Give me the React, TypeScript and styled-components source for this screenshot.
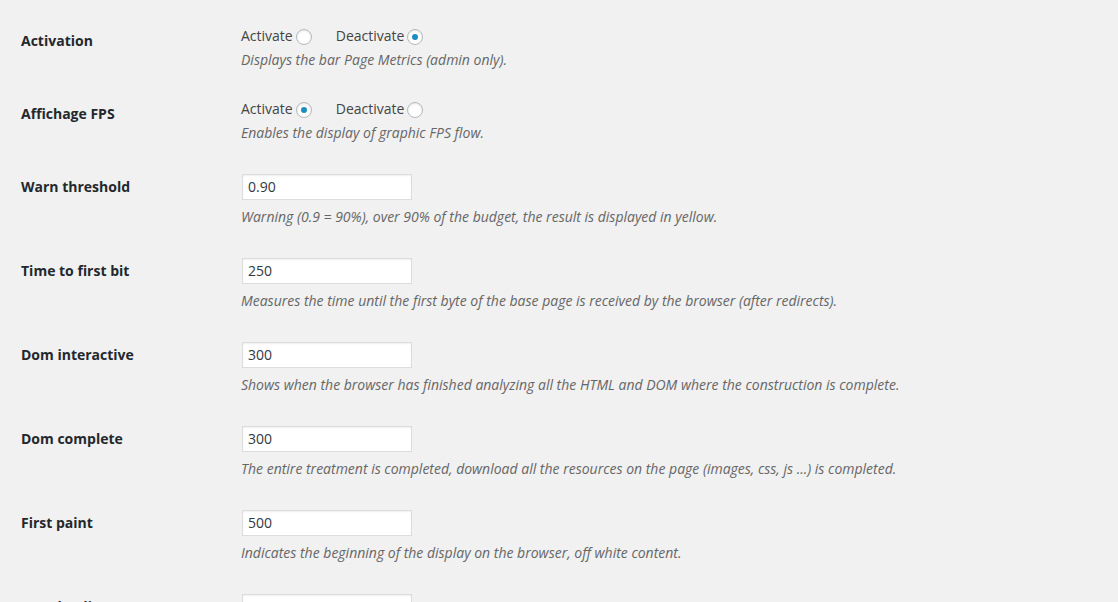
import React from "react";
import styled, { createGlobalStyle } from "styled-components";

const Global = createGlobalStyle`
  html, body { margin: 0; padding: 0; background: #f1f1f1; }
  body { font-family: "Open Sans", "Noto Sans", sans-serif; color: #444; font-size: 14px; }
`;

const Page = styled.div`
  padding: 11px 20px 0 21px;
  height: 591px;
  overflow: hidden;
`;

const Form = styled.div`
  display: flex;
  flex-direction: column;
`;

const Row = styled.div`
  display: grid;
  grid-template-columns: 210px 1fr;
`;

const Label = styled.div`
  padding: 21px 10px 19px 0;
  font-weight: 700;
  font-size: 14px;
  line-height: 18px;
  color: #23282d;
`;

const Field = styled.div`
  padding: 15px 10px 14px;
  display: flex;
  flex-direction: column;
  align-items: flex-start;
`;

const RadioLine = styled.div`
  display: flex;
  align-items: center;
  gap: 24px;
  height: 18px;
  line-height: 18px;
  margin-top: 1px;
`;

const RadioLabel = styled.label`
  display: flex;
  align-items: center;
  gap: 3px;
  color: #444;
  font-size: 14px;
`;

const Radio = styled.span<{ $checked?: boolean }>`
  position: relative;
  display: inline-block;
  width: 16px;
  height: 16px;
  box-sizing: border-box;
  border-radius: 50%;
  border: 1px solid #b4b9be;
  background: #fff;
  box-shadow: inset 0 1px 2px rgba(0, 0, 0, 0.1);
  margin-top: 1px;
  &::after {
    content: "";
    display: ${(p) => (p.$checked ? "block" : "none")};
    position: absolute;
    left: 4px;
    top: 4px;
    width: 6px;
    height: 6px;
    border-radius: 50%;
    background: #1e8cbe;
  }
`;

const Input = styled.div`
  margin-top: 2px;
  margin-left: 1px;
  width: 170px;
  height: 26px;
  box-sizing: border-box;
  border: 1px solid #ddd;
  background: #fff;
  box-shadow: inset 0 1px 2px rgba(0, 0, 0, 0.07);
  padding: 0 5px;
  font-size: 14px;
  line-height: 24px;
  color: #32373c;
`;

const Desc = styled.p<{ $after?: "radio" | "input" }>`
  margin: ${(p) => (p.$after === "radio" ? "5px" : "7px")} 0 0;
  font-size: 14px;
  line-height: 20px;
  font-style: italic;
  color: #666;
  white-space: nowrap;
`;

type Item =
  | { kind: "radio"; label: string; on: boolean; desc: string }
  | { kind: "input"; label: string; value: string; desc: string };

const items: Item[] = [
  { kind: "radio", label: "Activation", on: false, desc: "Displays the bar Page Metrics (admin only)." },
  { kind: "radio", label: "Affichage FPS", on: true, desc: "Enables the display of graphic FPS flow." },
  { kind: "input", label: "Warn threshold", value: "0.90", desc: "Warning (0.9 = 90%), over 90% of the budget, the result is displayed in yellow." },
  { kind: "input", label: "Time to first bit", value: "250", desc: "Measures the time until the first byte of the base page is received by the browser (after redirects)." },
  { kind: "input", label: "Dom interactive", value: "300", desc: "Shows when the browser has finished analyzing all the HTML and DOM where the construction is complete." },
  { kind: "input", label: "Dom complete", value: "300", desc: "The entire treatment is completed, download all the resources on the page (images, css, js ...) is completed." },
  { kind: "input", label: "First paint", value: "500", desc: "Indicates the beginning of the display on the browser, off white content." },
  { kind: "input", label: "Dom loading", value: "1000", desc: "" },
];

export default function App() {
  return (
    <>
      <Global />
      <Page>
        <Form>
          {items.map((it) => (
            <Row key={it.label}>
              <Label>{it.label}</Label>
              <Field>
                {it.kind === "radio" ? (
                  <>
                    <RadioLine>
                      <RadioLabel>
                        Activate <Radio $checked={it.on} />
                      </RadioLabel>
                      <RadioLabel>
                        Deactivate <Radio $checked={!it.on} />
                      </RadioLabel>
                    </RadioLine>
                    <Desc $after="radio">{it.desc}</Desc>
                  </>
                ) : (
                  <>
                    <Input>{it.value}</Input>
                    {it.desc && <Desc $after="input">{it.desc}</Desc>}
                  </>
                )}
              </Field>
            </Row>
          ))}
        </Form>
      </Page>
    </>
  );
}
